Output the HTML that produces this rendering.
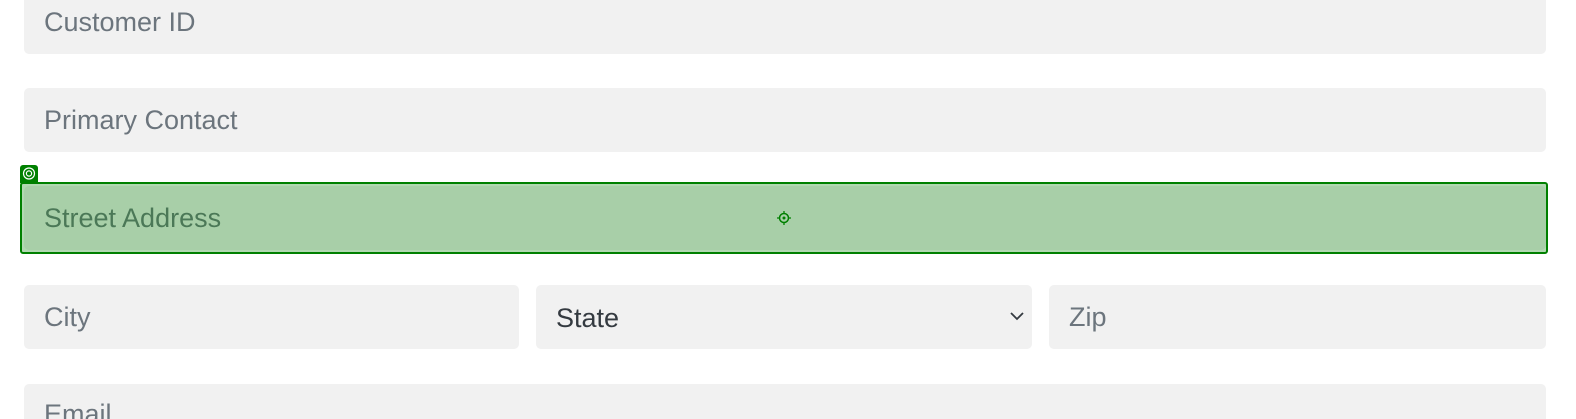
<!DOCTYPE html>
<html><head><style>
html,body{margin:0;padding:0;background:#fff;width:1576px;height:419px;overflow:hidden;position:relative;font-family:"Liberation Sans",Arial,sans-serif}
.f{position:absolute;background:#f1f1f1;border-radius:5px;height:64px;box-sizing:border-box;padding-left:20px;line-height:64px;font-size:27px;color:#6c757d;overflow:hidden}
</style></head><body>
<div class="f" style="left:24px;top:0;height:54px;line-height:44px;border-radius:0 0 5px 5px;width:1522px">Customer ID</div>
<div class="f" style="left:24px;top:88px;width:1522px">Primary Contact</div>
<div class="f" style="left:24px;top:186px;width:1522px">Street Address</div>
<div style="position:absolute;left:20px;top:182px;width:1528px;height:72px;box-sizing:border-box;border:2px solid #008000;border-radius:3px;background:rgba(0,128,0,0.3)"></div>
<div style="position:absolute;left:20px;top:165px;width:18px;height:18px;background:#008000;border-radius:3px 3px 0 0"></div>
<svg style="position:absolute;left:20px;top:165px" width="18" height="18"><circle cx="9" cy="8.5" r="5.5" fill="none" stroke="#fff" stroke-width="1.2"/><circle cx="9" cy="8.5" r="2.6" fill="none" stroke="#fff" stroke-width="1.2"/></svg>
<svg style="position:absolute;left:776px;top:210px" width="16" height="16"><circle cx="8" cy="8" r="4.5" fill="none" stroke="#008000" stroke-width="1.5"/><circle cx="8" cy="8" r="1.5" fill="#008000"/><path d="M8 1v3M8 12v3M1 8h3M12 8h3" stroke="#008000" stroke-width="1.3"/></svg>
<div class="f" style="left:24px;top:285px;width:495px">City</div>
<div class="f" style="left:536px;top:285px;width:496px;color:#343a40;line-height:66px">State
<svg style="position:absolute;left:473px;top:25px" width="16" height="12"><path d="M2 3l6 6 6-6" fill="none" stroke="#343a40" stroke-width="1.8"/></svg></div>
<div class="f" style="left:1049px;top:285px;width:497px">Zip</div>
<div class="f" style="left:24px;top:384px;height:35px;border-radius:5px 5px 0 0;width:1522px;line-height:60px">Email</div>
</body></html>
